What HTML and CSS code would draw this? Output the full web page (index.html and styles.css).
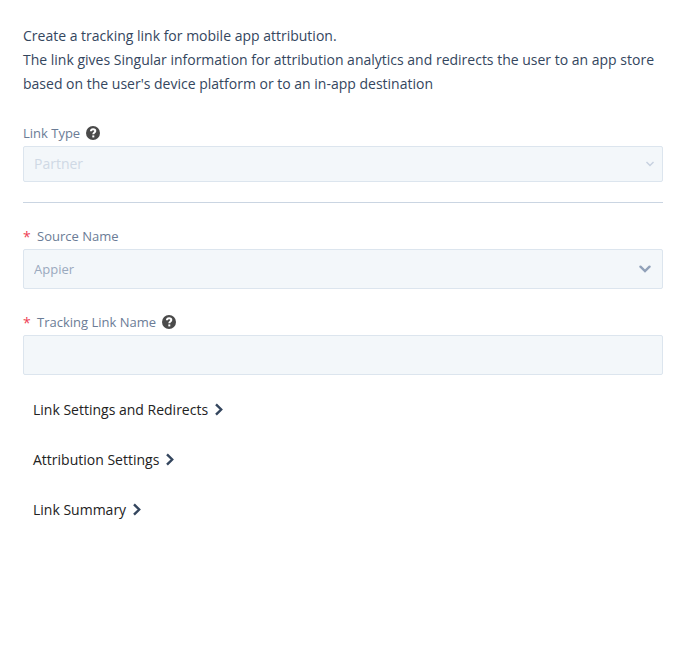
FILE: index.html
```html
<!DOCTYPE html>
<html lang="en">
<head>
    <meta charset="UTF-8">
    <meta name="viewport" content="width=device-width, initial-scale=1.0">
    <title>Create Tracking Link</title>
    <link rel="stylesheet" href="styles.css">
</head>
<body>
    <main class="container">
        <p class="intro">Create a tracking link for mobile app attribution.<br>
        The link gives Singular information for attribution analytics and redirects the user to an app store based on the user's device platform or to an in-app destination</p>

        <form>
            <div class="field">
                <div class="label-row">
                    <label for="link-type">Link Type</label>
                    <svg class="help" viewBox="0 0 14 14"><circle cx="7" cy="7" r="7"/><path d="M4.900 5.300C5 3.800 6 3.300 7.100 3.300c1.300 0 2.200.7 2.200 1.800 0 1.500-2 1.500-2 3.200"/><rect x="6.300" y="9.400" width="2" height="2"/></svg>
                </div>
                <div class="select-box small">
                    <select id="link-type" disabled>
                        <option>Partner</option>
                    </select>
                    <svg class="arrow" viewBox="0 0 8 6"><path d="M.5 1L4 4.500 7.500 1"/></svg>
                </div>
            </div>

            <hr>

            <div class="field">
                <div class="label-row">
                    <span class="required">*</span>
                    <label for="source-name">Source Name</label>
                </div>
                <div class="select-box">
                    <select id="source-name">
                        <option>Appier</option>
                    </select>
                    <svg class="arrow" viewBox="0 0 12 8"><path d="M1.500 1.700L6 6l4.500-4.300"/></svg>
                </div>
            </div>

            <div class="field">
                <div class="label-row">
                    <span class="required">*</span>
                    <label for="link-name">Tracking Link Name</label>
                    <svg class="help" viewBox="0 0 14 14"><circle cx="7" cy="7" r="7"/><path d="M4.900 5.300C5 3.800 6 3.300 7.100 3.300c1.300 0 2.200.7 2.200 1.800 0 1.500-2 1.500-2 3.200"/><rect x="6.300" y="9.400" width="2" height="2"/></svg>
                </div>
                <input type="text" id="link-name">
            </div>

            <div class="sections">
                <button type="button" class="section-btn">Link Settings and Redirects
                    <svg viewBox="0 0 10 14"><path d="M2 2.300L7.200 7.500 2 12.700"/></svg>
                </button>
                <button type="button" class="section-btn">Attribution Settings
                    <svg viewBox="0 0 10 14"><path d="M2 2.300L7.200 7.500 2 12.700"/></svg>
                </button>
                <button type="button" class="section-btn">Link Summary
                    <svg viewBox="0 0 10 14"><path d="M2 2.300L7.200 7.500 2 12.700"/></svg>
                </button>
            </div>
        </form>
    </main>
</body>
</html>
```
FILE: styles.css
```css
* {
    margin: 0;
    padding: 0;
    box-sizing: border-box;
    font-family: "Open Sans", sans-serif;
}

body {
    background: #fff;
    color: #34465e;
    font-size: 14px;
}

.container {
    padding: 24px 25px 24px 23px;
}

.intro {
    line-height: 24px;
    margin-bottom: 28px;
}

.field {
    margin-bottom: 24px;
}

.label-row {
    display: flex;
    align-items: center;
    height: 18px;
    margin-bottom: 4px;
    color: #6b7c96;
    font-size: 13px;
}

.required {
    width: 14px;
    color: #ee3f55;
    font-size: 14px;
}

.help {
    width: 14px;
    height: 14px;
    margin-left: 6px;
}

.help circle {
    fill: #4a4a4a;
}

.help path {
    fill: none;
    stroke: #fff;
    stroke-width: 2;
}

.help rect {
    fill: #fff;
}

.select-box {
    display: grid;
    align-items: center;
}

select,
input {
    width: 100%;
    height: 40px;
    padding: 0 10px;
    border: 1px solid #dce5ee;
    border-radius: 2px;
    background: #f3f7fa;
    color: #9aa9be;
    font-size: 13px;
    appearance: none;
}

.select-box select,
.arrow {
    grid-area: 1 / 1;
}

.arrow {
    justify-self: end;
    width: 12px;
    height: 8px;
    margin-right: 12px;
    fill: none;
    stroke: #91a1b9;
    stroke-width: 2.4;
    stroke-linecap: round;
    pointer-events: none;
}

.small select {
    height: 36px;
    padding-bottom: 2px;
    color: #cfd9e5;
    font-size: 14px;
    opacity: 1;
}

.small .arrow {
    width: 8px;
    height: 6px;
    margin-right: 9px;
    stroke: #c6d1df;
    stroke-width: 1.4;
    stroke-linecap: butt;
}

hr {
    margin: -4px 0 24px;
    border: none;
    border-top: 1px solid #cad5e2;
}

.sections {
    display: flex;
    flex-direction: column;
    align-items: flex-start;
    gap: 26px;
    margin-top: -2px;
    padding-left: 10px;
}

.section-btn {
    display: flex;
    align-items: center;
    gap: 6px;
    height: 24px;
    border: none;
    background: none;
    color: #222;
    font-size: 14px;
    cursor: pointer;
}

.section-btn svg {
    width: 10px;
    height: 14px;
    fill: none;
    stroke: #34465e;
    stroke-width: 2.4;
}
```
